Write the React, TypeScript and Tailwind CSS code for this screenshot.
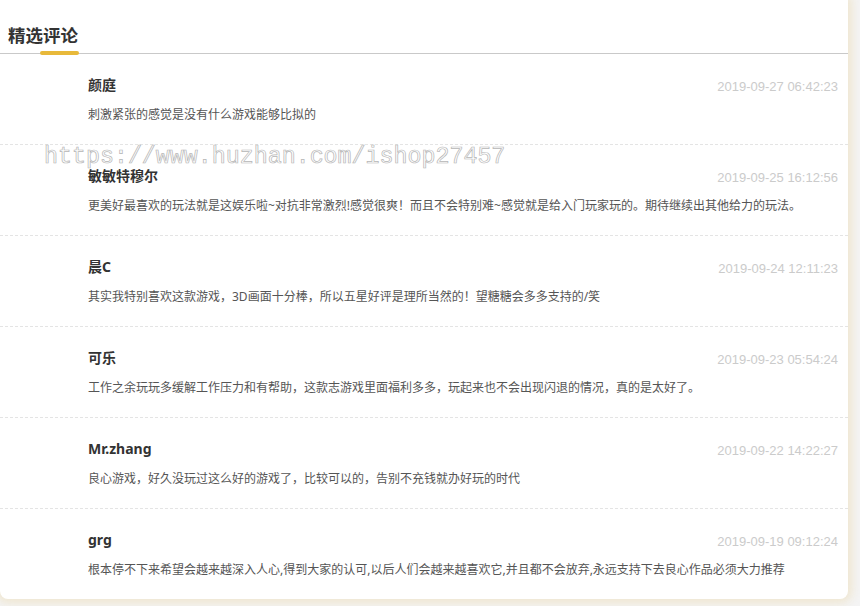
import React from "react";

const comments = [
  { name: "颜庭", date: "2019-09-27 06:42:23", text: "刺激紧张的感觉是没有什么游戏能够比拟的" },
  { name: "敏敏特穆尔", date: "2019-09-25 16:12:56", text: "更美好最喜欢的玩法就是这娱乐啦~对抗非常激烈!感觉很爽！而且不会特别难~感觉就是给入门玩家玩的。期待继续出其他给力的玩法。" },
  { name: "晨C", date: "2019-09-24 12:11:23", text: "其实我特别喜欢这款游戏，3D画面十分棒，所以五星好评是理所当然的！望糖糖会多多支持的/笑" },
  { name: "可乐", date: "2019-09-23 05:54:24", text: "工作之余玩玩多缓解工作压力和有帮助，这款志游戏里面福利多多，玩起来也不会出现闪退的情况，真的是太好了。" },
  { name: "Mr.zhang", date: "2019-09-22 14:22:27", text: "良心游戏，好久没玩过这么好的游戏了，比较可以的，告别不充钱就办好玩的时代" },
  { name: "grg", date: "2019-09-19 09:12:24", text: "根本停不下来希望会越来越深入人心,得到大家的认可,以后人们会越来越喜欢它,并且都不会放弃,永远支持下去良心作品必须大力推荐" },
];

export default function App() {
  return (
    <div
      className="w-[860px] h-[606px] overflow-hidden bg-[#f4f4f4] relative"
      style={{ fontFamily: '"Noto Sans", "Noto Sans CJK SC", sans-serif' }}
    >
      <div className="w-[848px] bg-white rounded-b-[8px] shadow-[0_0_10px_4px_rgba(238,226,196,0.75)] relative">
        <div className="h-[54px] border-b border-[#c9c9c9] relative">
          <div className="pl-[8px] pt-[22px] text-[17.5px] leading-[26px] font-semibold text-[#333]">
            精选评论
          </div>
          <div className="absolute left-[40px] bottom-[-2px] w-[39px] h-[4px] rounded-full bg-[#e8b93a]" />
        </div>
        {comments.map((c, i) => (
          <div
            key={i}
            className={
              "pl-[88px] pr-[10px] pt-[23px] pb-[19px] " +
              (i < comments.length - 1 ? "border-b border-dashed border-[#e4e4e4]" : "")
            }
          >
            <div className="flex items-start justify-between h-[20px]">
              <span className="text-[14px] leading-[16px] font-bold text-[#333]">{c.name}</span>
              <span
                className="text-[13px] leading-[20px] text-[#cbcbcb]"
                style={{ fontFamily: '"Liberation Sans", sans-serif' }}
              >
                {c.date}
              </span>
            </div>
            <div className="mt-[8px] h-[20px] leading-[20px] text-[12px] text-[#555] whitespace-nowrap">
              {c.text}
            </div>
          </div>
        ))}
      </div>
      <div
        className="absolute left-[44px] top-[141px] text-[23.3px] leading-[32px] text-transparent pointer-events-none whitespace-nowrap [-webkit-text-stroke:0.7px_#b5b5b5]"
        style={{ fontFamily: '"Liberation Mono", monospace' }}
      >
        https://www.huzhan.com/ishop27457
      </div>
    </div>
  );
}
